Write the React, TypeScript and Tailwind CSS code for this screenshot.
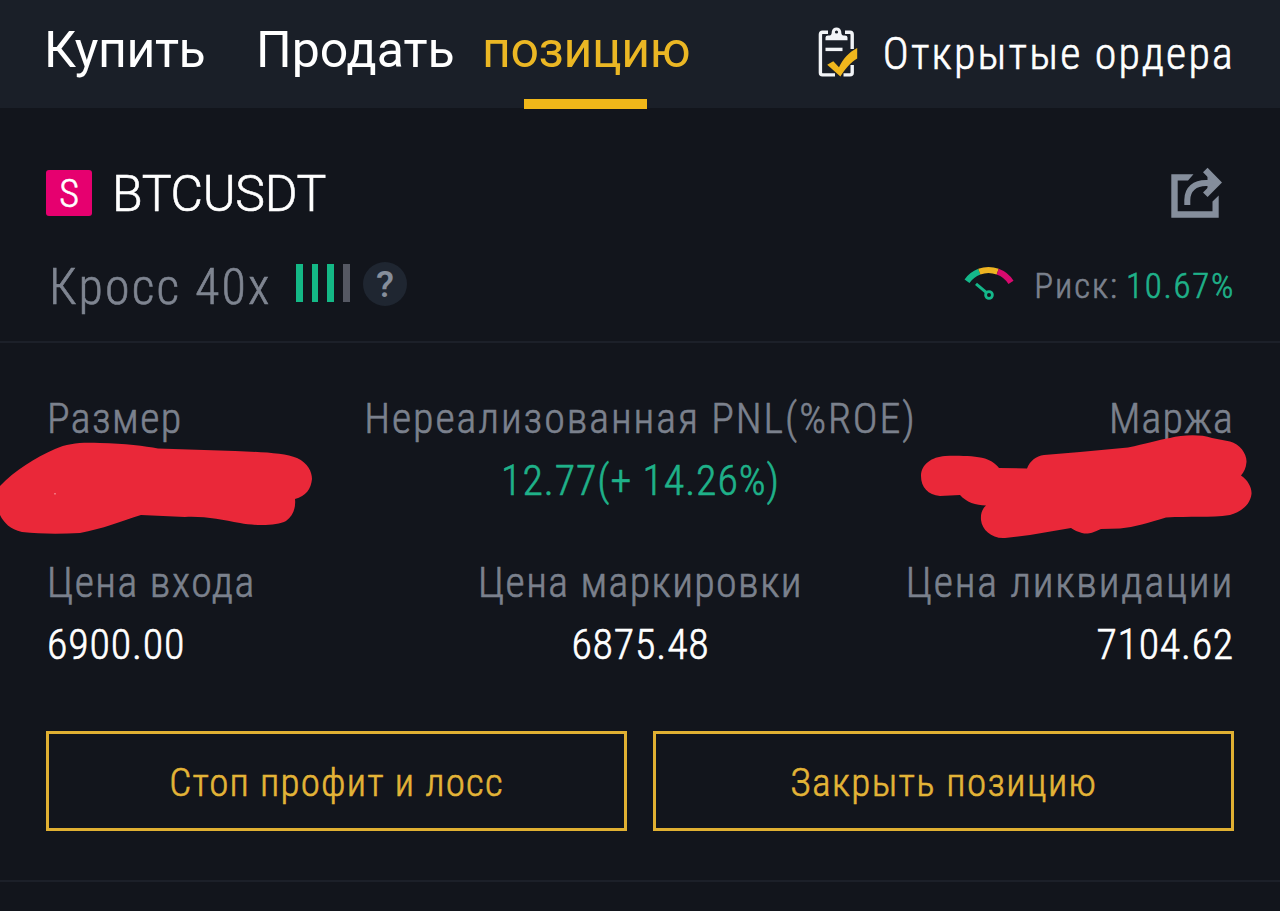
interface StatProps {
  label: string;
  value?: string;
  labelClass: string;
  valueClass?: string;
  align?: "start" | "center" | "end";
}

const ALIGN = {
  start: "items-start",
  center: "items-center",
  end: "items-end",
};

// Condensed light Roboto, thickened a little with a stroke of its own colour.
const DIN = "whitespace-nowrap font-light [font-stretch:75%] [-webkit-text-stroke:0.6px_currentColor]";

function ClipboardIcon() {
  return (
    <svg width="40" height="52" viewBox="0 0 40 52" fill="none">
      <path
        d="M10 6.3H4.5Q2.4 6.3 2.4 8.4V46.8Q2.4 48.9 4.5 48.9H17M25.5 48.9H32Q34.2 48.9 34.2 46.8V39M34.2 23V8.4Q34.2 6.3 32 6.3H27"
        stroke="#f2f4f7"
        strokeWidth="3.4"
      />
      <path
        fillRule="evenodd"
        d="M7.5 14.2V11.5Q7.5 9.4 10 9.4H11.5Q13.8 9.4 13.8 5.5A4.8 5 0 0 1 23.2 5.5Q23.2 9.4 25.5 9.4H27Q29.5 9.4 29.5 11.5V14.2ZM18.5 4.4A1.6 1.6 0 1 0 18.5 7.6A1.6 1.6 0 1 0 18.5 4.4Z"
        fill="#f2f4f7"
      />
      <path d="M7.5 23.4H24.5" stroke="#f2f4f7" strokeWidth="3.4" />
      <path d="M9.2 38.8L15.3 35.3L21 41.2C25 33 31 26 39.2 22V32.4C33 36 27 43 22.4 50.4Z" fill="#f0b71d" />
    </svg>
  );
}

function ShareIcon() {
  return (
    <svg width="52" height="52" viewBox="20 17 52 52" fill="none" className="text-[#858e9c]">
      <path d="M21.3 24.3H43.5L38 30.5H27.7V61.3H62.5V51.5L68.7 45.5V67.8H21.3Z" fill="currentColor" />
      <path d="M37.3 55V50C37.3 39 45 33 56 33H64" stroke="currentColor" strokeWidth="6" />
      <path d="M55.3 20L67.5 32.4L55.3 44.8" stroke="currentColor" strokeWidth="6.4" />
      <path d="M57.5 26L64 32.5L57.5 39Z" fill="currentColor" />
    </svg>
  );
}

function GaugeIcon() {
  return (
    <svg width="50" height="36" viewBox="25 17 50 36" fill="none">
      <path d="M28 32.2A26.5 26.5 0 0 1 40.3 22.6" stroke="#14b88a" strokeWidth="6" />
      <path d="M40.3 22.6A26.5 26.5 0 0 1 58.7 22.6" stroke="#eeb422" strokeWidth="6" />
      <path d="M58.7 22.6A26.5 26.5 0 0 1 72 33.3" stroke="#d80a6e" strokeWidth="6" />
      <path d="M37 34.8L47.5 43.6" stroke="#14b88a" strokeWidth="3" />
      <circle cx="50" cy="46" r="3.4" stroke="#14b88a" strokeWidth="2.8" />
    </svg>
  );
}

// Hand-drawn marker over the position size.
function SizeMarker() {
  return (
    <svg className="absolute left-0 top-[98px]" width="314" height="96" viewBox="0 440 314 96">
      <path
        fill="#ea2839"
        d="M0 486C15 470 35 458 55 449C68 443 82 442 100 443C125 443.5 145 446 158 448.5L235 451C262 452 285 453 297 458C308 463 312 472 312 479C311 489 306 496 295 499C296 508 293 516 286 521C277 526 255 526 240 523C222 520 205 516 185 517L141 515C122 521 102 529 80 533C60 534 40 534 22 532C10 529 4 523 0 515Z"
      />
      <rect x="54" y="493" width="2" height="1.5" fill="#f2707a" />
    </svg>
  );
}

// Hand-drawn marker over the margin.
function MarginMarker() {
  return (
    <svg className="absolute right-[26px] top-[90px]" width="336" height="108" viewBox="918 432 336 108">
      <path
        fill="#ea2839"
        d="M921 476C921 464 932 457 945 456C960 455.5 975 456 985 458.5C992 461 996 464 999 468L1027 468.5C1030 461 1036 456 1044 455L1080 452L1128 447.5C1145 444 1158 440 1170 438C1182 435 1200 434 1212 438L1230 441.5C1240 444 1247 454 1246.5 462C1246 468 1244 472 1241 475.5C1248 480 1252 488 1251.5 494C1250 506 1240 512 1230 515C1210 518 1190 516 1166 517.5C1148 523 1135 527 1120 528.5L1101 529C1092 533 1088 534.5 1082 533C1078 532 1074 530 1071 528L1030 535L1005 538C992 539 982 530 981 520C980.5 514 982 509 986 505.5C976 505.5 966 502 960 495L940 496C928 495 921 487 921 476Z"
      />
    </svg>
  );
}

function Stat({ label, value, labelClass, valueClass = "", align = "start" }: StatProps) {
  return (
    <div className={`flex flex-col gap-[14px] text-[42px] leading-[48px] ${DIN} ${ALIGN[align]}`}>
      <span className={`text-[#7b818d] ${labelClass}`}>{label}</span>
      <span className={`h-[48px] ${valueClass}`}>{value}</span>
    </div>
  );
}

function Header() {
  return (
    <header className="flex h-[108px] justify-between bg-[#1a1f28] pl-[44px] pr-[45px] text-white">
      <nav className="flex text-[50px] leading-[100px]">
        <span className="w-[212px] tracking-[-0.4px]">Купить</span>
        <span className="w-[226px]">Продать</span>
        <span className="relative tracking-[-0.4px] text-[#ebb724]">
          позицию
          <span className="absolute left-[42px] top-[99px] h-[10px] w-[123px] bg-[#f0b719]" />
        </span>
      </nav>
      <div className="flex items-start">
        <div className="mr-[25px] pt-[26px]">
          <ClipboardIcon />
        </div>
        <span className={`text-[44px] leading-[109px] tracking-[2.2px] ${DIN}`}>Открытые ордера</span>
      </div>
    </header>
  );
}

function Leverage() {
  return (
    <div className="flex h-[44px] items-center">
      <span className={`w-[250px] pl-[3px] pt-1 text-[50px] leading-[44px] tracking-[2.2px] text-[#7f8591] ${DIN}`}>
        Кросс 40x
      </span>
      <div className="flex h-[38px] w-[67px] gap-[9px] self-start pt-px">
        <i className="h-[38px] w-[6.5px] bg-[#14b886]" />
        <i className="h-[38px] w-[6.5px] bg-[#14b886]" />
        <i className="h-[38px] w-[6.5px] bg-[#14b886]" />
        <i className="h-[38px] w-[7.5px] bg-[#555863]" />
      </div>
      <span className="-mt-[2px] flex size-[44px] items-center justify-center rounded-full bg-[#1f2631] text-[37px] font-medium leading-none text-[#868e9b]">
        ?
      </span>
    </div>
  );
}

export default function App() {
  return (
    <div className="h-[911px] overflow-hidden bg-[#12151c] font-['Roboto',sans-serif]">
      <Header />

      <section className="h-[235px] border-b-2 border-[#1c2029] pl-[46px] pr-[45px] pt-[60px]">
        <div className="flex h-[50px] items-center justify-between">
          <div className="flex items-center">
            <span className={`mr-[20px] flex size-[46px] items-center justify-center rounded-[3px] bg-[#e6006f] pt-[2px] text-[38px] leading-none text-white ${DIN}`}>
              S
            </span>
            <span className="pt-px text-[50px] font-light leading-[50px] tracking-[-0.3px] text-white [-webkit-text-stroke:0.6px_currentColor]">
              BTCUSDT
            </span>
          </div>
          <div className="mr-[13px]">
            <ShareIcon />
          </div>
        </div>
        <div className="mt-[43px] flex items-center justify-between">
          <Leverage />
          <div className="flex items-center">
            <div className="-mt-[2px]">
              <GaugeIcon />
            </div>
            <p className={`ml-[20px] pt-[4px] text-[35px] leading-[44px] ${DIN}`}>
              <span className="mr-[7px] tracking-[1.9px] text-[#7b818d]">Риск:</span>
              <span className="tracking-[1.7px] text-[#1fb189]">10.67%</span>
            </p>
          </div>
        </div>
      </section>

      <section className="relative -mt-px pl-[47px] pr-[46px] pt-[53px]">
        <div className="grid grid-cols-3">
          <Stat label="Размер" labelClass="tracking-[1.4px]" />
          <Stat
            label="Нереализованная PNL(%ROE)"
            labelClass="tracking-[1.9px]"
            value="12.77(+ 14.26%)"
            valueClass="tracking-[0.9px] text-[#1fb189]"
            align="center"
          />
          <Stat label="Маржа" labelClass="tracking-[1.2px]" align="end" />
        </div>
        <div className="mt-[54px] grid grid-cols-3">
          <Stat
            label="Цена входа"
            labelClass="tracking-[1.5px]"
            value="6900.00"
            valueClass="tracking-[0.8px] text-white"
          />
          <Stat
            label="Цена маркировки"
            labelClass="tracking-[1.4px]"
            value="6875.48"
            valueClass="tracking-[0.8px] text-white"
            align="center"
          />
          <Stat
            label="Цена ликвидации"
            labelClass="tracking-[1.8px]"
            value="7104.62"
            valueClass="tracking-[0.7px] text-white"
            align="end"
          />
        </div>
        <SizeMarker />
        <MarginMarker />
      </section>

      <section className="grid grid-cols-2 gap-[26px] border-b-2 border-[#1c2029] px-[46px] pb-[49px] pt-[62px]">
        <button
          type="button"
          className={`h-[100px] border-[3px] border-[#e0b032] pt-[4px] text-[39px] tracking-[1.2px] text-[#e3b437] ${DIN}`}
        >
          Стоп профит и лосс
        </button>
        <button
          type="button"
          className={`h-[100px] border-[3px] border-[#e0b032] pl-px pt-[4px] text-[39px] tracking-[1.4px] text-[#e3b437] ${DIN}`}
        >
          Закрыть позицию
        </button>
      </section>
    </div>
  );
}
